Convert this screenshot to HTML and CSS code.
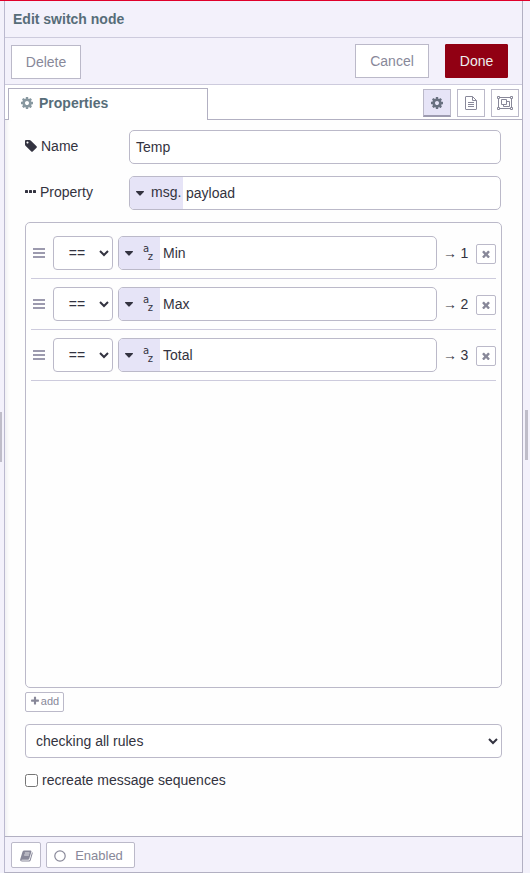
FILE: index.html
```html
<!DOCTYPE html>
<html lang="en">
<head>
<meta charset="utf-8">
<title>Edit switch node</title>
<link rel="stylesheet" href="styles.css">
</head>
<body>
<svg class="defs" width="0" height="0" aria-hidden="true">
  <symbol id="cog" viewBox="0 0 1792 1792"><path d="M1152 896q0-106-75-181t-181-75-181 75-75 181 75 181 181 75 181-75 75-181zm512-109v222q0 12-8 23t-20 13l-185 28q-19 54-39 91 35 50 107 138 10 12 10 25t-9 23q-27 37-99 108t-94 71q-12 0-26-9l-138-108q-44 23-91 38-16 136-29 186-7 28-36 28h-222q-14 0-24.500-8.500t-11.500-21.500l-28-184q-49-16-90-37l-141 107q-10 9-25 9-14 0-25-11-126-114-165-168-7-10-7-23 0-12 8-23 15-21 51-66.500t54-70.500q-27-50-41-99l-183-27q-13-2-21-12.500t-8-23.500v-222q0-12 8-23t19-13l186-28q14-46 39-92-40-57-107-138-10-12-10-24 0-10 9-23 26-36 98.500-107.500t94.500-71.500q13 0 26 10l138 107q44-23 91-38 16-136 29-186 7-28 36-28h222q14 0 24.500 8.500t11.500 21.500l28 184q49 16 90 37l142-107q9-9 24-9 13 0 25 10 129 119 165 170 7 8 7 22 0 12-8 23-15 21-51 66.500t-54 70.500q26 50 41 98l183 28q13 2 21 12.500t8 23.500z"/></symbol>
  <symbol id="tag" viewBox="128 0 1664 1792"><path d="M576 448q0-53-37.500-90.500t-90.500-37.500-90.500 37.500-37.500 90.500 37.500 90.500 90.500 37.500 90.500-37.500 37.500-90.500zm1067 576q0 53-37 90l-491 492q-39 37-91 37-53 0-90-37l-715-716q-38-37-64.500-101t-26.500-117v-416q0-52 38-90t90-38h416q53 0 117 26.500t102 64.500l715 714q37 39 37 91z"/></symbol>
  <symbol id="times" viewBox="256 256 1280 1280"><path d="M1490 1322q0 40-28 68l-136 136q-28 28-68 28t-68-28l-294-294-294 294q-28 28-68 28t-68-28l-136-136q-28-28-28-68t28-68l294-294-294-294q-28-28-28-68t28-68l136-136q28-28 68-28t68 28l294 294 294-294q28-28 68-28t68 28l136 136q28 28 28 68t-28 68l-294 294 294 294q28 28 28 68z"/></symbol>
  <symbol id="plus" viewBox="0 0 1792 1792"><path d="M1600 736v192q0 40-28 68t-68 28h-416v416q0 40-28 68t-68 28h-192q-40 0-68-28t-28-68v-416h-416q-40 0-68-28t-28-68v-192q0-40 28-68t68-28h416v-416q0-40 28-68t68-28h192q40 0 68 28t28 68v416h416q40 0 68 28t28 68z"/></symbol>
  <symbol id="bars" viewBox="0 0 12 10"><path d="M0 0h12v2H0zM0 4h12v2H0zM0 8h12v2H0z"/></symbol>
  <symbol id="caret" viewBox="0 0 8 5"><path d="M.4 0h7.200q.7.300.2.900L4.400 4.500q-.4.400-.8 0L.2.900Q-.3.300.4 0z"/></symbol>
</svg>
<div class="workspace">
  <div class="grip grip-left"></div>
  <main class="tray">
    <header class="title">Edit switch node</header>
    <div class="toolbar">
      <button class="btn delete">Delete</button>
      <button class="btn cancel">Cancel</button>
      <button class="btn done">Done</button>
    </div>
    <nav class="tabs">
      <div class="tab"><svg width="14" height="14"><use href="#cog"/></svg>Properties</div>
      <div class="tab-line">
        <button class="tab-btn active"><svg width="14" height="14"><use href="#cog"/></svg></button>
        <button class="tab-btn"><svg class="outline" width="12" height="14" viewBox="0 0 12 14"><path d="M.5 1Q.5.500 1 .500H7.500L11.500 4.500V13Q11.500 13.500 11 13.500H1Q.5 13.500.5 13zM7.500.500V4.500H11.500M3 6.500H9M3 8.500H9M3 10.500H9"/></svg></button>
        <button class="tab-btn"><svg class="outline" width="16" height="14" viewBox="0 0 16 14"><path d="M3 1.500H13M3 12.500H13M1.500 3V11M14.500 3V11M.5.500h2v2h-2zM13.500.500h2v2h-2zM.5 11.500h2v2h-2zM13.500 11.500h2v2h-2zM4.500 3.500H9.500V8.500H4.500zM9.500 5.500H12.500V10.500H6.500V8.500"/></svg></button>
      </div>
    </nav>
    <section class="form">
      <div class="field">
        <label><svg width="13" height="14"><use href="#tag"/></svg>Name</label>
        <div class="input plain">Temp</div>
      </div>
      <div class="field">
        <label class="prop"><svg width="11" height="3"><rect width="3" height="3" rx=".6"/><rect x="4" width="3" height="3" rx=".6"/><rect x="8" width="3" height="3" rx=".6"/></svg>Property</label>
        <div class="input"><span class="type msg"><svg width="8" height="5"><use href="#caret"/></svg>msg.</span><span class="value">payload</span></div>
      </div>
      <div class="rules">
        <div class="rule">
          <svg class="handle" width="12" height="10"><use href="#bars"/></svg>
          <select class="op"><option>==</option></select>
          <div class="input"><span class="type az"><svg width="8" height="5"><use href="#caret"/></svg><span class="letters"><i>a</i><i>z</i></span></span><span class="value">Min</span></div>
          <span class="port">→ 1</span>
          <button class="remove"><svg width="8" height="8"><use href="#times"/></svg></button>
        </div>
        <div class="rule">
          <svg class="handle" width="12" height="10"><use href="#bars"/></svg>
          <select class="op"><option>==</option></select>
          <div class="input"><span class="type az"><svg width="8" height="5"><use href="#caret"/></svg><span class="letters"><i>a</i><i>z</i></span></span><span class="value">Max</span></div>
          <span class="port">→ 2</span>
          <button class="remove"><svg width="8" height="8"><use href="#times"/></svg></button>
        </div>
        <div class="rule">
          <svg class="handle" width="12" height="10"><use href="#bars"/></svg>
          <select class="op"><option>==</option></select>
          <div class="input"><span class="type az"><svg width="8" height="5"><use href="#caret"/></svg><span class="letters"><i>a</i><i>z</i></span></span><span class="value">Total</span></div>
          <span class="port">→ 3</span>
          <button class="remove"><svg width="8" height="8"><use href="#times"/></svg></button>
        </div>
      </div>
      <button class="add"><svg width="10" height="10"><use href="#plus"/></svg>add</button>
      <select class="check-all"><option>checking all rules</option></select>
      <label class="sequences"><input type="checkbox">recreate message sequences</label>
    </section>
    <footer class="footer">
      <button class="foot-btn book"><svg width="13" height="12" viewBox="0 0 13 12"><path d="M4.300.500H10.700Q11.700.700 11.400 1.700L9.200 8.900Q8.900 9.700 8 9.700H2Q1.100 9.700 1.300 10.400H8.900Q9.600 10.400 9.900 9.500L12 2.200Q12.900 2.400 12.700 3.200L10.700 10.300Q10.300 11.600 9.100 11.600H2Q0 11.400.1 9.700L2.500 1.700Q3 .500 4.300.500z"/><path d="M4.800 3H9.500M4.200 5H8.900" stroke="#fff" stroke-width=".8"/></svg></button>
      <button class="foot-btn enabled"><svg width="12" height="12" viewBox="0 0 12 12"><circle cx="6" cy="6" r="5.200" fill="none" stroke="currentColor" stroke-width="1.200"/></svg>Enabled</button>
    </footer>
  </main>
  <div class="grip grip-right"></div>
</div>
</body>
</html>
```
FILE: styles.css
```css
* { box-sizing: border-box; }

body {
  margin: 0;
  font: 14px/20px "Liberation Sans", Arial, sans-serif;
  color: #333340;
  background: #f3f1fb;
}

svg { display: block; flex: none; fill: currentColor; }
svg.outline { fill: none; stroke: currentColor; }
.defs { position: absolute; }

button, select {
  margin: 0;
  font: inherit;
  color: inherit;
}

button {
  display: flex;
  align-items: center;
  justify-content: center;
  padding: 0;
  background: #fff;
  border: 1px solid #bbb9c9;
  color: #888899;
}

.workspace {
  display: flex;
  align-items: center;
  height: 873px;
  border-top: 1px solid #e0002a;
}

.grip { height: 50px; background: #bfbdc9; }
.grip-left { width: 2px; margin-right: 2px; }
.grip-right { width: 3px; margin-left: 2px; margin-top: -4px; }

.tray {
  display: flex;
  flex-direction: column;
  width: 519px;
  height: 872px;
  border: 1px solid #b2b0c2;
  border-top: 0;
  border-left-color: #bbb9cf;
}

.title {
  height: 37px;
  padding: 8px;
  border-bottom: 1px solid #cdcbdd;
  font-weight: bold;
  color: #576d79;
}

.toolbar {
  display: flex;
  height: 47px;
  padding: 6px 14px 0 6px;
  border-bottom: 1px solid #cdcbdd;
}

.btn { height: 34px; }
.delete { width: 70px; margin: 1px auto 0 0; }
.cancel { width: 74px; margin-right: 16px; }
.done { width: 63px; background: #910013; border-color: #910013; color: #eee; border-radius: 1px; }

.tabs {
  display: flex;
  height: 35px;
  padding-top: 3px;
  background: linear-gradient(#b2b0c2, #b2b0c2) 0 100% / 3px 1px no-repeat #fff;
  padding-left: 3px;
}

.tab {
  display: flex;
  width: 200px;
  gap: 5px;
  padding: 4px 0 0 11px;
  border: 1px solid #b2b0c2;
  border-bottom: 0;
  font-weight: bold;
  color: #576d79;
}
.tab svg { margin-top: 3px; opacity: .7; }

.tab-line {
  display: flex;
  flex: 1;
  justify-content: flex-end;
  gap: 6px;
  padding: 1px 3px 0 0;
  border-bottom: 1px solid #b2b0c2;
}

.tab-btn { width: 28px; height: 28px; }
.tab-btn.active { background: #e6e4f7; border-bottom: 2px solid #9d9bb0; color: #687080; }

.form {
  flex: 1;
  padding: 10px 20px 0;
  background: #fefefe;
  box-shadow: inset 5px 0 5px -4px #e8e8ed;
}

.field { display: flex; height: 34px; margin-bottom: 12px; padding-right: 1px; }
.field label { display: flex; width: 104px; gap: 3px; padding-top: 6px; }
.field label svg { margin-top: 3px; }
.field label.prop { gap: 4px; }
.field label.prop svg { margin-top: 8px; }

.input {
  display: flex;
  flex: 1;
  min-width: 0;
  height: 34px;
  background: #fff;
  border: 1px solid #bbb9c9;
  border-radius: 5px;
  overflow: hidden;
}
.input.plain { padding: 6px; }

.type { display: flex; align-items: center; background: #e6e4f7; }
.type.msg { width: 53px; gap: 7px; padding-left: 6px; padding-bottom: 2px; }
.type.msg svg { margin-top: 3px; }
.type.az { width: 41px; gap: 10px; padding-left: 6px; }
.type.az svg { margin-top: 1px; }
.value { padding: 6px 3px; }

.letters {
  display: flex;
  flex-direction: column;
  width: 10px;
  font: 10px/8px "DejaVu Sans", sans-serif;
}
.letters i { font-style: normal; }
.letters i:last-child { align-self: flex-end; }

.rules {
  height: 466px;
  padding: 5px;
  border: 1px solid #bbb9c9;
  border-radius: 5px;
}

.rule {
  display: flex;
  height: 51px;
  padding-top: 8px;
  border-bottom: 1px solid #cdcbdd;
}
.handle { margin: 12px 8px 0 2px; color: #9c9aae; }

select {
  height: 34px;
  padding: 4px 6px;
  background: #fff;
  border: 1px solid #bbb9c9;
  border-radius: 4px;
}
.op { width: 60px; margin-right: 5px; text-align: center; }
.port { width: 39px; padding: 7px 0 0 6px; white-space: nowrap; word-spacing: -.5px; }

.remove { width: 20px; height: 20px; margin-top: 8px; padding-bottom: 1px; border-radius: 2px; }
.add { width: 39px; height: 20px; margin: 4px 0 12px; padding-bottom: 2px; gap: 1px; border-radius: 2px; font-size: 11px; }
.check-all { display: block; width: 477px; }

.sequences { display: flex; margin-top: 12px; }
.sequences input { width: 13px; height: 13px; margin: 4px 4px 0 0; }

.footer {
  display: flex;
  gap: 5px;
  height: 36px;
  padding: 5px 6px;
  border-top: 1px solid #b2b0c2;
}
.foot-btn { height: 26px; padding-top: 1px; font-size: 13px; border-radius: 2px; }
.book { width: 30px; }
.enabled { width: 89px; gap: 9px; padding-right: 4px; }
```
